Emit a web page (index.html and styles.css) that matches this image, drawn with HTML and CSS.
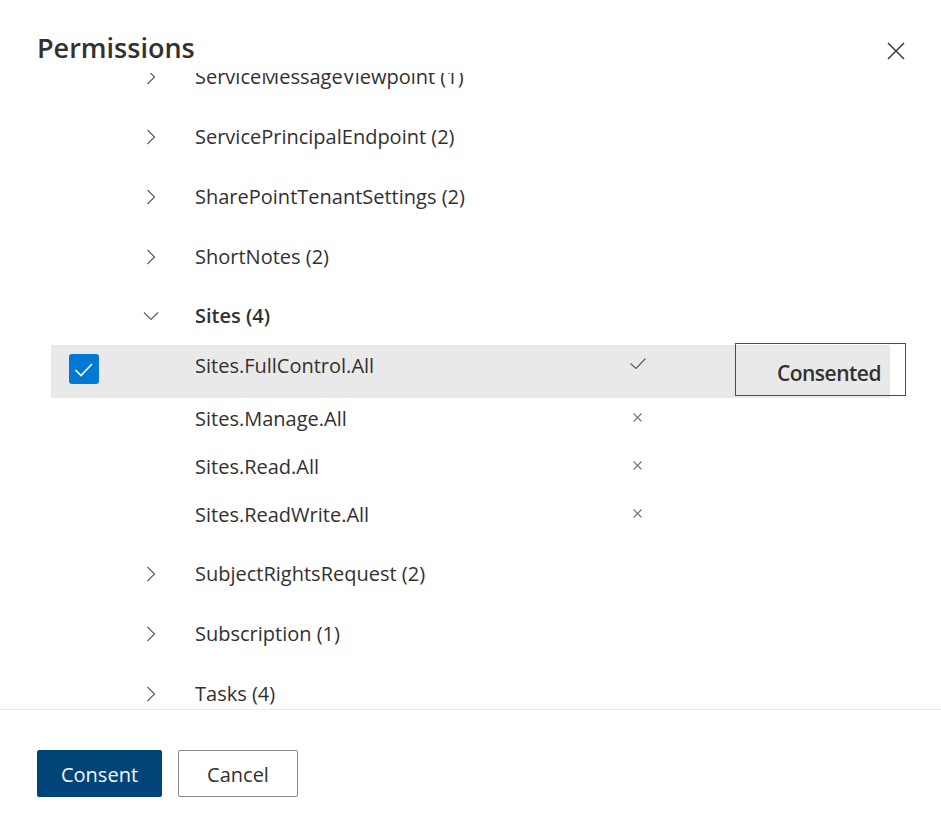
FILE: index.html
```html
<!DOCTYPE html>
<html lang="en">

<head>
    <meta charset="UTF-8">
    <meta name="viewport" content="width=device-width, initial-scale=1.0">
    <title>Permissions</title>
    <link rel="stylesheet" href="styles.css">
</head>

<body>
    <div class="dialog">
        <div class="dialog-header">
            <h1>Permissions</h1>
            <button class="close-button" aria-label="Close">
                <svg width="18" height="18" viewBox="0 0 18 18">
                    <path d="M1 1 L17 17 M17 1 L1 17" stroke="#323130" stroke-width="1.4" fill="none" />
                </svg>
            </button>
        </div>

        <div class="list-viewport">
            <div class="perm-list">
                <div class="group-row">
                    <span class="select-cell"></span>
                    <span class="chevron-cell"><svg width="16" height="16" viewBox="0 0 16 16"><path d="M4.5 1 L11.5 8 L4.5 15" /></svg></span>
                    <span class="name">ServiceMessageViewpoint (1)</span>
                </div>
                <div class="group-row">
                    <span class="select-cell"></span>
                    <span class="chevron-cell"><svg width="16" height="16" viewBox="0 0 16 16"><path d="M4.5 1 L11.5 8 L4.5 15" /></svg></span>
                    <span class="name">ServicePrincipalEndpoint (2)</span>
                </div>
                <div class="group-row">
                    <span class="select-cell"></span>
                    <span class="chevron-cell"><svg width="16" height="16" viewBox="0 0 16 16"><path d="M4.5 1 L11.5 8 L4.5 15" /></svg></span>
                    <span class="name">SharePointTenantSettings (2)</span>
                </div>
                <div class="group-row">
                    <span class="select-cell"></span>
                    <span class="chevron-cell"><svg width="16" height="16" viewBox="0 0 16 16"><path d="M4.5 1 L11.5 8 L4.5 15" /></svg></span>
                    <span class="name">ShortNotes (2)</span>
                </div>
                <div class="group-row open">
                    <span class="select-cell"></span>
                    <span class="chevron-cell"><svg width="16" height="16" viewBox="0 0 16 16"><path d="M1 4.5 L8 11.5 L15 4.5" /></svg></span>
                    <span class="name">Sites (4)</span>
                </div>

                <div class="group-items">
                    <div class="item-row selected">
                        <span class="select-cell">
                            <span class="checkbox">
                                <svg width="30" height="30" viewBox="0 0 30 30"><path d="M6.5 16 L12 21.5 L23 10" /></svg>
                            </span>
                        </span>
                        <span class="chevron-cell"></span>
                        <span class="name">Sites.FullControl.All</span>
                        <span class="status-cell">
                            <svg class="check" width="16" height="11" viewBox="0 0 16 11"><path d="M0.5 5.5 L6 10.5 L15.5 0.5" /></svg>
                        </span>
                        <span class="spacer"></span>
                        <span class="consent-cell">Consented</span>
                        <div class="highlight-box"></div>
                    </div>
                    <div class="item-row">
                        <span class="select-cell"></span>
                        <span class="chevron-cell"></span>
                        <span class="name">Sites.Manage.All</span>
                        <span class="status-cell">
                            <svg class="cross" width="9" height="9" viewBox="0 0 9 9"><path d="M0.5 0.5 L8.5 8.5 M8.5 0.5 L0.5 8.5" /></svg>
                        </span>
                    </div>
                    <div class="item-row">
                        <span class="select-cell"></span>
                        <span class="chevron-cell"></span>
                        <span class="name">Sites.Read.All</span>
                        <span class="status-cell">
                            <svg class="cross" width="9" height="9" viewBox="0 0 9 9"><path d="M0.5 0.5 L8.5 8.5 M8.5 0.5 L0.5 8.5" /></svg>
                        </span>
                    </div>
                    <div class="item-row">
                        <span class="select-cell"></span>
                        <span class="chevron-cell"></span>
                        <span class="name">Sites.ReadWrite.All</span>
                        <span class="status-cell">
                            <svg class="cross" width="9" height="9" viewBox="0 0 9 9"><path d="M0.5 0.5 L8.5 8.5 M8.5 0.5 L0.5 8.5" /></svg>
                        </span>
                    </div>
                </div>

                <div class="group-row">
                    <span class="select-cell"></span>
                    <span class="chevron-cell"><svg width="16" height="16" viewBox="0 0 16 16"><path d="M4.5 1 L11.5 8 L4.5 15" /></svg></span>
                    <span class="name">SubjectRightsRequest (2)</span>
                </div>
                <div class="group-row">
                    <span class="select-cell"></span>
                    <span class="chevron-cell"><svg width="16" height="16" viewBox="0 0 16 16"><path d="M4.5 1 L11.5 8 L4.5 15" /></svg></span>
                    <span class="name">Subscription (1)</span>
                </div>
                <div class="group-row">
                    <span class="select-cell"></span>
                    <span class="chevron-cell"><svg width="16" height="16" viewBox="0 0 16 16"><path d="M4.5 1 L11.5 8 L4.5 15" /></svg></span>
                    <span class="name">Tasks (4)</span>
                </div>
                <div class="group-row">
                    <span class="select-cell"></span>
                    <span class="chevron-cell"><svg width="16" height="16" viewBox="0 0 16 16"><path d="M4.5 1 L11.5 8 L4.5 15" /></svg></span>
                    <span class="name">TeamMember (3)</span>
                </div>
            </div>
        </div>

        <div class="dialog-footer">
            <button class="btn btn-primary">Consent</button>
            <button class="btn btn-default">Cancel</button>
        </div>
    </div>
</body>

</html>
```

FILE: styles.css
```css
body {
    margin: 0;
    background-color: #fff;
    font-family: "Open Sans", "Noto Sans", sans-serif;
    color: #323130;
}

.dialog {
    width: 941px;
    height: 821px;
    background-color: #fff;
}

.dialog-header {
    display: flex;
    justify-content: space-between;
    align-items: flex-start;
    height: 73px;
    box-sizing: border-box;
    padding: 30px 29px 0 37px;
}

.dialog-header h1 {
    margin: 0;
    font-size: 27px;
    line-height: 36px;
    font-weight: 600;
    color: #323130;
}

.close-button {
    width: 32px;
    height: 32px;
    margin-top: 5px;
    padding: 0;
    border: none;
    background: none;
    display: flex;
    justify-content: center;
    align-items: center;
    cursor: pointer;
}

/* scrolled list, clipped like the real scroll pane */
.list-viewport {
    height: 636px;
    overflow: hidden;
}

.perm-list {
    margin-top: -26px;
    padding-left: 51px;
    width: 839px;
}

.group-row,
.item-row {
    display: grid;
    grid-template-columns: 93px 51px 425px 35px 80px 155px;
    font-size: 20px;
    line-height: 28px;
}

.group-row {
    height: 60px;
    align-items: center;
}

.group-row.open {
    height: 58px;
}

.group-row.open .name {
    font-weight: 600;
}

.chevron-cell svg {
    display: block;
    margin-left: -1px;
    fill: none;
    stroke: #605e5c;
    stroke-width: 1.2;
}

.group-items {
    margin-bottom: 2px;
}

.item-row {
    position: relative;
    height: 48px;
    box-sizing: border-box;
    padding-top: 7px;
    align-items: start;
}

.item-row.selected {
    height: 53px;
    background-color: #e9e9e9;
}

.checkbox {
    display: block;
    width: 30px;
    height: 30px;
    margin: 2px 0 0 18px;
    border-radius: 3px;
    background-color: #0078d4;
}

.checkbox svg {
    display: block;
    fill: none;
    stroke: #fff;
    stroke-width: 1.6;
}

.status-cell {
    display: flex;
    justify-content: center;
}

.status-cell svg {
    fill: none;
    stroke: #605e5c;
    stroke-width: 1.2;
}

.status-cell .check {
    margin-top: 6px;
}

.status-cell .cross {
    margin-top: 8px;
    stroke: #797775;
}

.consent-cell {
    margin-top: 7px;
    padding-right: 9px;
    text-align: right;
    font-size: 21px;
    letter-spacing: -0.5px;
    font-weight: 600;
    color: #323130;
}

/* red annotation frame drawn over the row */
.highlight-box {
    position: absolute;
    left: 684px;
    top: -2px;
    width: 171px;
    height: 53px;
    box-sizing: border-box;
    border: 1px solid #ff0000;
}

.dialog-footer {
    display: flex;
    gap: 16px;
    border-top: 1px solid #edebe9;
    padding: 40px 0 0 37px;
}

.btn {
    height: 47px;
    padding: 2px 0 0;
    border-radius: 2px;
    font-family: "Open Sans", "Noto Sans", sans-serif;
    font-size: 20px;
    line-height: 28px;
    cursor: pointer;
}

.btn-primary {
    width: 125px;
    background-color: #004578;
    border: 1px solid #004578;
    color: #f8f8f8;
}

.btn-default {
    width: 120px;
    background-color: #fff;
    border: 1px solid #8a8886;
    color: #323130;
}
```
